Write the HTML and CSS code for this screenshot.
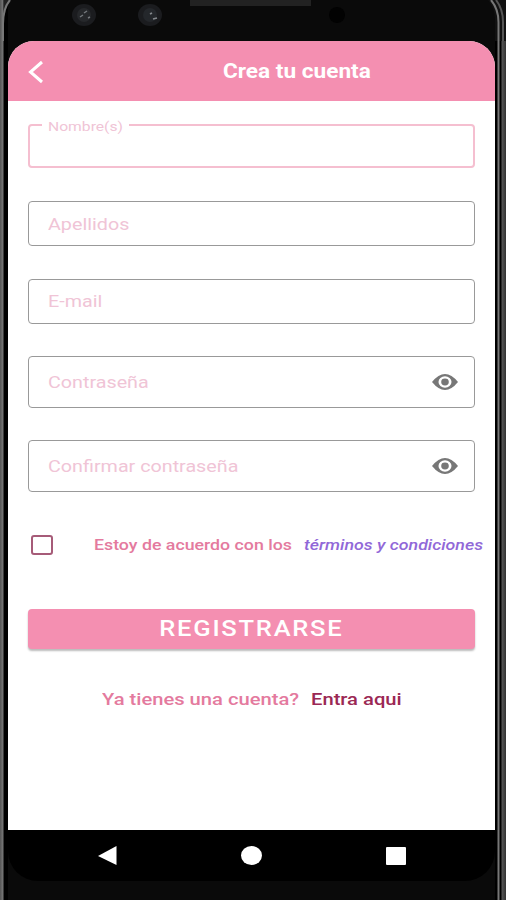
FILE: index.html
```html
<!DOCTYPE html>
<html lang="es">
<head>
    <meta charset="UTF-8">
    <meta name="viewport" content="width=device-width, initial-scale=1.0">
    <title>Crea tu cuenta</title>
    <link rel="stylesheet" href="styles.css">
</head>
<body>
    <div class="phone">
        <div class="bezel">
            <svg width="506" height="41" viewBox="0 0 506 41">
                <!-- rounded frame corners -->
                <path d="M0 0H11Q4 7 4 24V0Z" fill="#222"/>
                <path d="M10 0Q3 8 3 24V41" fill="none" stroke="#777" stroke-width="2"/>
                <path d="M488 0H506V41H495V20Q495 8 488 0Z" fill="#111"/>
                <path d="M491 0Q498.500 9 498.500 22V41" fill="none" stroke="#777" stroke-width="2"/>
                <path d="M496 0Q503 9 503 22V41" fill="none" stroke="#555" stroke-width="2"/>

                <rect x="190" y="0" width="121" height="6" fill="#222"/>
                <ellipse cx="84" cy="15" rx="12" ry="11" fill="#1b1c1f"/>
                <ellipse cx="84" cy="15" rx="7" ry="7" fill="#26282b"/>
                <path d="M80 17l3-2M84 13l3-2M88 18l2-1" stroke="#75797d" stroke-width="1.5"/>
                <ellipse cx="150" cy="15" rx="12" ry="11" fill="#1b1c1f"/>
                <ellipse cx="150" cy="15" rx="7" ry="7" fill="#24272b"/>
                <path d="M150 14l2-1M153 19l4-1" stroke="#85898d" stroke-width="1.8"/>
                <circle cx="337" cy="15" r="8" fill="#020202"/>
            </svg>
        </div>

        <div class="screen">
            <header>
                <svg class="back" width="16" height="24" viewBox="0 0 16 24">
                    <path d="M14 2L2.500 12L14 22" fill="none" stroke="#fff" stroke-width="3"/>
                </svg>
                <h1 class="title"><span class="wide">Crea tu cuenta</span></h1>
            </header>

            <form>
                <fieldset class="field active">
                    <legend><span class="wide">Nombre(s)</span></legend>
                </fieldset>
                <div class="field"><span class="wide">Apellidos</span></div>
                <div class="field"><span class="wide">E-mail</span></div>
                <div class="field tall">
                    <span class="wide">Contraseña</span>
                    <svg class="eye" width="28" height="18" viewBox="0 0 28 18">
                        <path d="M1 9Q14-7 27 9Q14 25 1 9Z" fill="#777"/>
                        <ellipse cx="14" cy="9" rx="6.500" ry="5.700" fill="#fff"/>
                        <ellipse cx="14" cy="9" rx="3.800" ry="3.400" fill="#777"/>
                    </svg>
                </div>
                <div class="field tall">
                    <span class="wide">Confirmar contraseña</span>
                    <svg class="eye" width="28" height="18" viewBox="0 0 28 18">
                        <path d="M1 9Q14-7 27 9Q14 25 1 9Z" fill="#777"/>
                        <ellipse cx="14" cy="9" rx="6.500" ry="5.700" fill="#fff"/>
                        <ellipse cx="14" cy="9" rx="3.800" ry="3.400" fill="#777"/>
                    </svg>
                </div>

                <div class="terms">
                    <span class="check"></span>
                    <span class="agree"><span class="wide">Estoy de acuerdo con los</span></span>
                    <a class="link"><span class="wide">términos y condiciones</span></a>
                </div>

                <button class="submit" type="button"><span class="wide">REGISTRARSE</span></button>

                <p class="login">
                    <span class="ask"><span class="wide">Ya tienes una cuenta?</span></span>
                    <a class="enter"><span class="wide">Entra aqui</span></a>
                </p>
            </form>
        </div>

        <nav>
            <svg width="488" height="52" viewBox="8 830 488 52">
                <path d="M98 856L116.500 846V865Z" fill="#fff"/>
                <ellipse cx="251.500" cy="855.500" rx="10.500" ry="9.500" fill="#fff"/>
                <rect x="386" y="847" width="20" height="18" rx="1" fill="#fff"/>
            </svg>
        </nav>
    </div>
</body>
</html>
```

FILE: styles.css
```css
* {
    margin: 0;
    padding: 0;
    box-sizing: border-box;
    font-family: Roboto, Arial, sans-serif;
}

body {
    width: 506px;
    height: 900px;
    overflow: hidden;
    background: #000;
}

.phone {
    height: 900px;
    padding: 0 11px 0 8px;
    background: linear-gradient(to right, #555 0, #777 3px, #000 4px, #000 8px, #0a0a0a 8px, #0a0a0a 495px, #000 495px, #000 497px, #777 498px, #777 499px, #000 500px, #000 501px, #555 502px, #333 506px);
}

.bezel {
    height: 41px;
    margin: 0 -11px 0 -8px;
}

svg {
    display: block;
}

.screen {
    height: 789px;
    background: #fff;
    border-radius: 26px 26px 0 0;
    overflow: hidden;
}

header {
    display: flex;
    align-items: center;
    height: 60px;
    padding-top: 1px;
    padding-left: 20px;
    background: #f48fb1;
}

.title {
    margin-left: 179px;
    font-size: 19.5px;
    line-height: 25px;
    font-weight: 700;
    color: #fff;
}

.wide {
    display: inline-block;
    white-space: nowrap;
    transform: scaleX(1.16);
    transform-origin: left center;
}

form {
    padding: 23px 20px 0;
}

.field {
    display: flex;
    align-items: center;
    justify-content: space-between;
    height: 45px;
    margin-bottom: 32.5px;
    padding: 0 15px 0 19px;
    border: 1px solid #999;
    border-radius: 4px;
    font-size: 17px;
    color: #f0c4d6;
}

.active {
    display: block;
    height: 51px;
    margin-top: -7px;
    margin-bottom: 33px;
    padding: 0 12px;
    border: 2px solid #f5bfd0;
}

.active legend {
    width: 87px;
    height: 16px;
    padding-left: 6px;
    font-size: 13.5px;
    line-height: 18px;
}

.tall {
    height: 51.5px;
}

.terms {
    display: flex;
    align-items: center;
    height: 24px;
    margin-top: 41px;
    padding-left: 3px;
    font-size: 15.3px;
    font-weight: 500;
}

.check {
    width: 22px;
    height: 20px;
    border: 2px solid #a65b78;
    border-radius: 3px;
}

.agree {
    width: 210px;
    margin-left: 41px;
    color: #e47a9e;
}

.link {
    color: #9168d8;
    font-style: italic;
}

.submit {
    display: flex;
    justify-content: center;
    align-items: center;
    width: 447px;
    height: 40px;
    margin-top: 52px;
    border: none;
    border-radius: 4px;
    background: #f48fb1;
    box-shadow: 0 2px 2px #bbb;
    color: #fff;
    font-size: 22px;
    font-weight: 500;
    letter-spacing: 1.5px;
}

.submit .wide {
    transform-origin: center;
}

.login {
    display: flex;
    margin-top: 39px;
    padding-left: 74px;
    font-size: 17.4px;
    line-height: 22px;
    font-weight: 500;
}

.ask {
    width: 209px;
    color: #e47a9e;
}

.enter {
    color: #9b2854;
}

nav {
    height: 51px;
    background: #000;
    border-radius: 0 0 30px 30px;
}
```
